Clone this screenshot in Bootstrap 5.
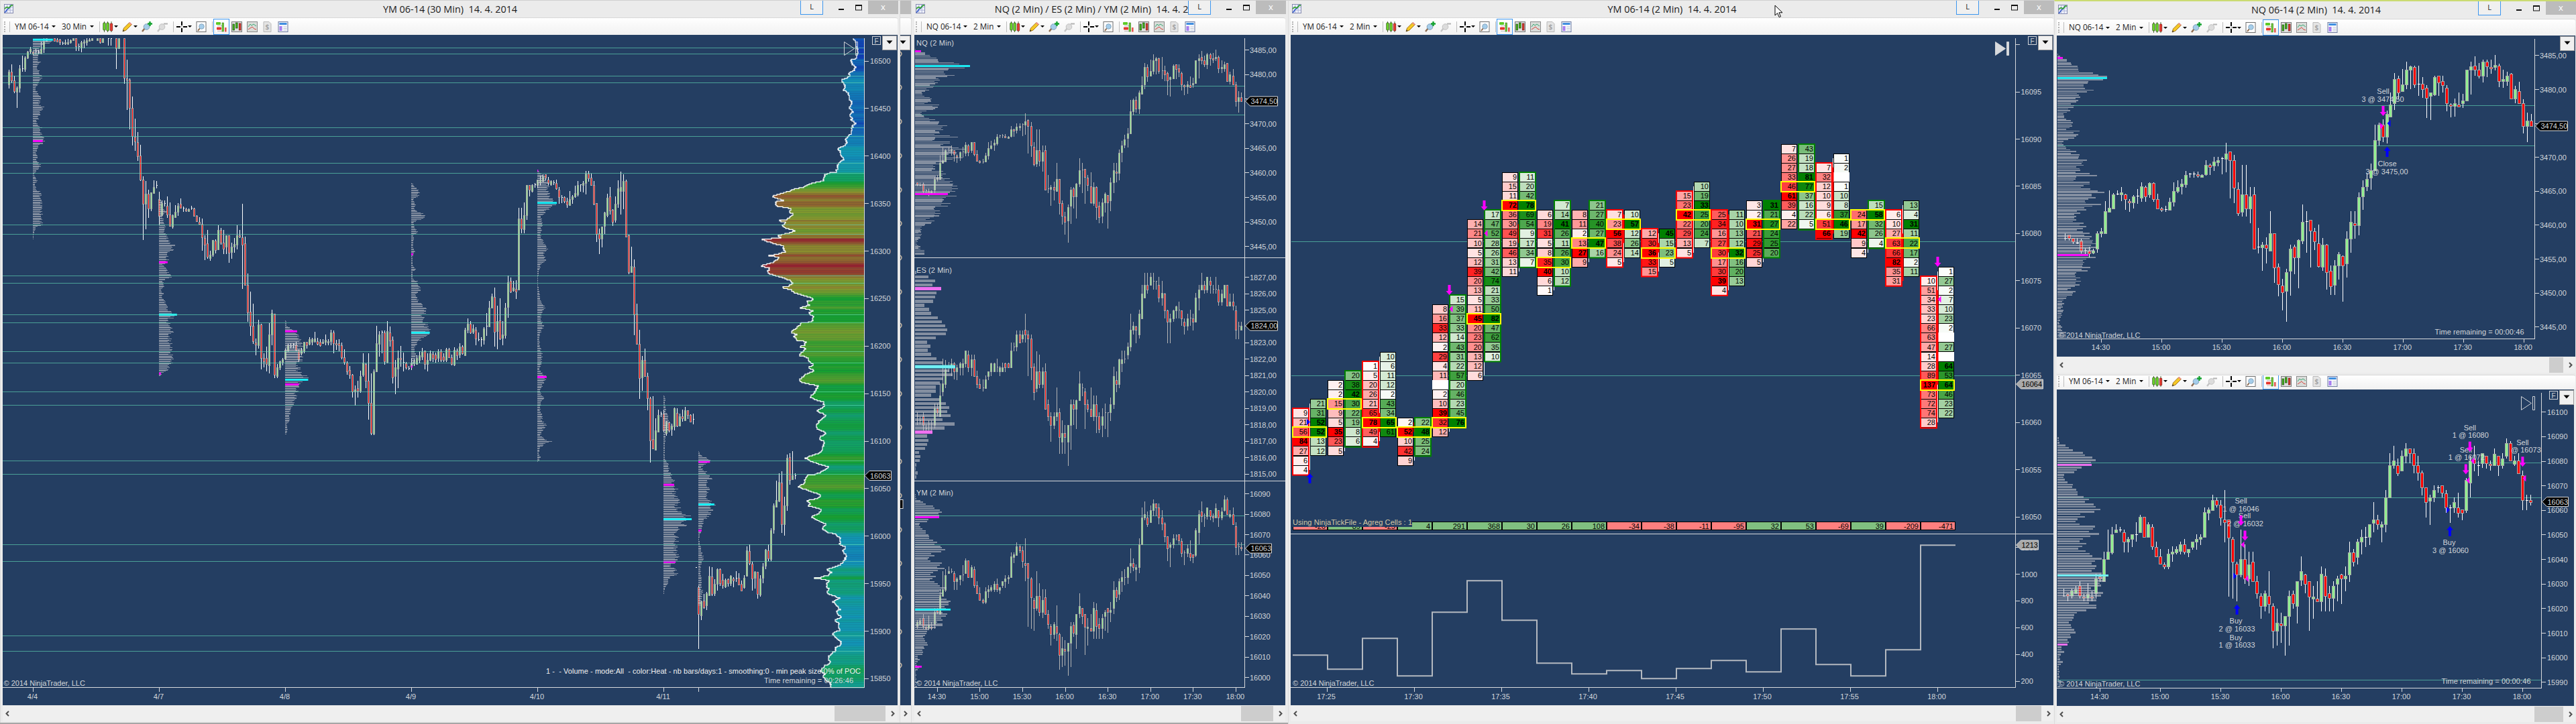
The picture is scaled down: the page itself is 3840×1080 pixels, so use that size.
<!DOCTYPE html>
<html lang="en">
<head>
    <meta charset="UTF-8">
    <meta name="viewport" content="width=device-width, initial-scale=1.0">
    <link href="https://cdn.jsdelivr.net/npm/bootstrap@5.3.2/dist/css/bootstrap.min.css" rel="stylesheet">
    <title>NinjaTrader Charts</title>
    <style>
        body {
            width: 3840px;
            height: 1080px;
            overflow: hidden;
            background-color: #a6a6a6;
            font-family: "Open Sans", "Noto Sans", sans-serif;
            color: #1c1c1c;
        }
        .win {
            height: 1078px;
            background-color: #ebebeb;
            border-top: 1px solid #d0d0d0;
            border-left: 1px solid #dcdcdc;
            flex: none;
        }
        .win-1 { width: 1341px; padding: 0 3px 0 3px; }
        .win-back { width: 17px; padding-right: 0; overflow: hidden; }
        .win-2 { width: 562px; padding: 0 4px 0 4px; }
        .win-3 { width: 1142px; padding: 0 1px 0 3px; height: 1080px; }
        .win-4 { width: 778px; padding: 0 1px 0 3px; height: 1080px; border-top: 2px solid #cbdb72; }
        .title-bar {
            height: 25px;
            flex: none;
            font-size: 14.4px;
            line-height: 25px;
            white-space: pre;
        }
        .win-4 .title-bar { height: 26px; }
        .app-icon { top: 5px; left: 2px; }
        .win-btns { right: -1px; top: 0; height: 20px; }
        .l-btn {
            width: 34px;
            height: 21px;
            border: 1px solid #3c96ef;
            border-top: 0;
            background-color: #f0f0f0;
            font-size: 11px;
            line-height: 18px;
        }
        .min-max { width: 54px; margin-left: 13px; }
        .close-btn { width: 45px; height: 20px; background-color: #bcbcbc; color: #fff; font-size: 13px; line-height: 19px; }
        .tool-bar {
            height: 26px;
            flex: none;
            background: linear-gradient(#ffffff, #f1f1f1);
            border-top: 1px solid #d8d8d8;
            border-radius: 0 3px 3px 0;
            font-size: 11.7px;
            padding-left: 2px;
            overflow: hidden;
        }
        .win-4 .tool-bar { height: 25px; }
        .win-4 .tool-low { height: 22px; margin-top: 3px; }
        .tool-low > * { position: relative; top: -2px; }
        .grip { width: 2px; height: 16px; border-left: 2px dotted #b4b4b4; margin-right: 6px; }
        .bar-sep { width: 1px; height: 16px; background-color: #bdbdbd; }
        .caret { border: 3px solid transparent; border-top-color: #000; border-bottom: 0; width: 6px; height: 3px; }
        .tool-on { outline: 1px solid #3c96ef; outline-offset: 3px; background-color: #fff; }
        .chart { flex: none; display: block; background-color: #243e62; }
        .chart text { font-family: "Liberation Sans", Arial, sans-serif; font-size: 11px; fill: #d3d6da; white-space: pre; }
        .chart .dark { fill: #000; }
        .scroll-bar { height: 23px; flex: none; background-color: #efefef; margin-top: 1px; color: #444; }
        .thumb { height: 23px; background-color: #cdcdcd; }
        .mouse { left: 724px; top: 6px; z-index: 3; }
    </style>
</head>
<body>
<div class="d-flex">
    <section class="win win-1 d-flex flex-column">
        <div class="title-bar position-relative text-center">YM 06-14 (30 Min)  14. 4. 2014</div>
        <div class="tool-bar d-flex align-items-center" data-symbol="YM 06-14" data-period="30 Min" data-on="1"></div>
        <svg class="chart" id="ym30" width="1334" height="1000" viewBox="4 52 1334 1000"></svg>
        <div class="scroll-bar d-flex justify-content-between align-items-center" data-thumb="76" data-gap="1"></div>
    </section>

    <section class="win win-back d-flex flex-column">
        <div style="height: 25px"><div class="close-btn"></div></div>
        <div class="tool-bar"></div>
        <svg class="chart" id="back" width="16" height="1000" viewBox="1342 52 16 1000"></svg>
        <div class="scroll-bar d-flex justify-content-center align-items-center">
            <svg width="6" height="9" viewBox="0 0 6 9"><path d="M1 1l3.5 3.5L1 8" fill="none" stroke="#505050" stroke-width="2"/></svg>
        </div>
    </section>

    <section class="win win-2 d-flex flex-column">
        <div class="title-bar position-relative text-center">NQ (2 Min) / ES (2 Min) / YM (2 Min)  14. 4. 2014</div>
        <div class="tool-bar d-flex align-items-center" data-symbol="NQ 06-14" data-period="2 Min"></div>
        <svg class="chart" id="triple" width="553" height="1000" viewBox="1363 52 553 1000"></svg>
        <div class="scroll-bar d-flex justify-content-between align-items-center" data-thumb="48" data-gap="1"></div>
    </section>

    <section class="win win-3 d-flex flex-column position-relative">
        <div class="title-bar position-relative text-center">YM 06-14 (2 Min)  14. 4. 2014</div>
        <div class="tool-bar d-flex align-items-center" data-symbol="YM 06-14" data-period="2 Min" data-on="1"></div>
        <svg class="chart" id="cells" width="1137" height="1000" viewBox="1924 52 1137 1000"></svg>
        <div class="scroll-bar d-flex justify-content-between align-items-center" data-thumb="38" data-gap="4"></div>
        <svg class="mouse position-absolute" width="14" height="20" viewBox="0 0 14 20"><path d="M1 1v15l3.6-3.4 2.6 6 2.3-1-2.6-5.8H12z" fill="#fff" stroke="#000"/></svg>
    </section>

    <section class="win win-4 d-flex flex-column">
        <div class="title-bar position-relative text-center">NQ 06-14 (2 Min)  14. 4. 2014</div>
        <div class="tool-bar d-flex align-items-center" data-symbol="NQ 06-14" data-period="2 Min" data-on="1"></div>
        <svg class="chart" id="nq2" width="773" height="479" viewBox="3066 53 773 479"></svg>
        <div class="scroll-bar d-flex justify-content-between align-items-center" data-thumb="21" data-gap="1"></div>
        <div class="tool-bar tool-low d-flex align-items-center" data-symbol="YM 06-14" data-period="2 Min" data-on="1"></div>
        <svg class="chart" id="ym2" width="771" height="472" viewBox="3065 582 771 472"></svg>
        <div class="scroll-bar d-flex justify-content-between align-items-center" data-thumb="43" data-gap="1"></div>
    </section>
</div>

<script src="https://cdn.jsdelivr.net/npm/bootstrap@5.3.2/dist/js/bootstrap.bundle.min.js"></script>
<script>
    // ---------- window chrome ----------
    const icon = (body, cls = '', ml = 0) => `<svg class="${cls}" width="16" height="16" viewBox="0 0 16 16" style="margin-left:${ml}px;flex:none">${body}</svg>`;
    const caret = ml => `<span class="caret" style="margin-left:${ml}px"></span>`;
    const sep = ml => `<span class="bar-sep" style="margin-left:${ml}px"></span>`;

    const ICONS = {
        candles: '<g stroke="#2a4a10" stroke-width=".8"><path d="M2.5 0v16M7.5 0v16M13 0v16"/><rect x=".8" y="2" width="3.4" height="11" rx="1" fill="#6fe02c"/><rect x="5.9" y="2" width="3.4" height="12" rx="1" fill="#6fe02c"/><rect x="11.3" y="3" width="3.4" height="11" rx="1" fill="#e83a30" stroke="#7c1a10"/></g>',
        pencil: '<path d="M1 15l1.5-5L11 1.5l3.5 3L6 13z" fill="#f5c826" stroke="#a5761a"/><path d="M10 2.5l1.5-1.6 3.2 3-1.5 1.6z" fill="#ee8f8a"/><path d="M1 15l.9-2.8L3.600 14z" fill="#333"/>',
        zoomIn: '<path d="M1 15l4-5" stroke="#8e6c50" stroke-width="2.4"/><circle cx="7.500" cy="8" r="4.300" fill="#a5cdea" stroke="#7f9fb8"/><path d="M12.500 0v7M9 3.500h7" stroke="#12a22e" stroke-width="2.400"/>',
        zoomOut: '<path d="M1 15l4-5" stroke="#c4c4c4" stroke-width="2.4"/><circle cx="7.500" cy="8" r="4.300" fill="#dcdcdc" stroke="#c0c0c0"/><path d="M10 3.500h6" stroke="#b4b4b4" stroke-width="1.800"/>',
        cross: '<path d="M8 0v6M8 10v6M0 8h6M10 8h6" stroke="#000" stroke-width="2"/><path d="M7.500 8h1" stroke="#000"/>',
        page: '<rect x="1" y=".5" width="14" height="15" fill="#fff" stroke="#6e6e6e"/><path d="M3 14l3-4" stroke="#8e6c50" stroke-width="2"/><circle cx="8.500" cy="7.500" r="3.800" fill="#a5cdea" stroke="#86a5bd"/>',
        depth: '<rect x="0" y="1" width="7" height="4" rx="1" fill="#5ecb27"/><rect x="1" y="8.500" width="7" height="4" rx="1" fill="#e3372e"/><path d="M2 6.500h8M2 14.500h8" stroke="#bbb"/><rect x="9" y="2" width="2.500" height="13" fill="#6fd035" stroke="#31711a" stroke-width=".6"/><rect x="13" y="9" width="2.600" height="6.500" fill="#e35750"/>',
        bars: '<rect x=".5" y=".5" width="15" height="15" fill="#dedede" stroke="#7a7a7a"/><rect x="2" y="4" width="2.600" height="9" fill="#45b51c" stroke="#164e08" stroke-width=".7"/><rect x="6.500" y="2" width="2.600" height="8" fill="#45b51c" stroke="#164e08" stroke-width=".7"/><rect x="11.300" y="3" width="2.700" height="10" fill="#dd3a30" stroke="#6e150f" stroke-width=".7"/>',
        area: '<rect x=".5" y=".5" width="15" height="15" fill="#d9dcd9" stroke="#8a8a8a"/><path d="M2 8l3-4 2 2 3-2 4 3" fill="none" stroke="#3aa873"/><path d="M2 12l3-2 3-2 3 3 3 1" fill="none" stroke="#d8453d"/>',
        dollar: '<path d="M2 .5h8l3 3v12H2z" fill="#e4e4e4" stroke="#b9b9b9"/><text x="4.500" y="12" font-size="10" font-weight="bold" fill="#a5a5a5">$</text>',
        form: '<rect x="1" y=".5" width="14" height="15" fill="#f4f6fb" stroke="#6d7aa0"/><rect x="2.500" y="2" width="11" height="3" fill="#3f8ee0"/><rect x="2.500" y="7" width="4" height="7" fill="#a77ff0"/><path d="M8.500 8h5M8.500 10.500h5M8.500 13h5" stroke="#c5cad6"/>',
        app: '<rect x=".5" y=".5" width="15" height="15" fill="#eef0fa" stroke="#7a80a8"/><path d="M5.500 1v14M10.500 1v14M1 5.500h14M1 10.500h14" stroke="#a9b0d6"/><path d="M1 14c4 0 3-6 6-6s3-3 4-6" fill="none" stroke="#2a54c8" stroke-width="1.600"/><path d="M1 8l4-3 3 2 5-5 2 1" fill="none" stroke="#34a72c" stroke-width="1.800"/>'
    };

    document.querySelectorAll('.tool-bar[data-symbol]').forEach(bar => {
        bar.innerHTML = '<span class="grip"></span>' + sep(0)
            + `<span style="margin-left:7px;width:51px;white-space:nowrap">${bar.dataset.symbol}</span>` + caret(4)
            + `<span style="margin-left:9px;white-space:nowrap">${bar.dataset.period}</span>` + caret(5) + sep(8)
            + icon(ICONS.candles, '', 4) + caret(1) + icon(ICONS.pencil, '', 6) + caret(1)
            + icon(ICONS.zoomIn, '', 6) + icon(ICONS.zoomOut, '', 7) + sep(8)
            + icon(ICONS.cross, '', 4) + caret(1) + icon(ICONS.page, '', 6) + sep(8)
            + icon(ICONS.depth, bar.dataset.on ? 'tool-on' : '', 5) + icon(ICONS.bars, '', 7)
            + icon(ICONS.area, '', 7) + icon(ICONS.dollar, '', 7) + icon(ICONS.form, '', 7);
    });

    document.querySelectorAll('.title-bar').forEach(bar => {
        bar.insertAdjacentHTML('beforeend', `
            <svg class="app-icon position-absolute" width="14" height="14" viewBox="0 0 16 16">${ICONS.app}</svg>
            <div class="win-btns position-absolute d-flex">
                <div class="l-btn text-center">L</div>
                <svg class="min-max" width="54" height="20" viewBox="0 0 54 20"><path d="M10 13h8" stroke="#111" stroke-width="2"/><rect x="35.500" y="7" width="9" height="7" fill="none" stroke="#111"/><path d="M35 7h10" stroke="#111" stroke-width="2"/></svg>
                <div class="close-btn text-center">x</div>
            </div>`);
    });

    document.querySelectorAll('.scroll-bar[data-thumb]').forEach(bar => {
        const arrow = d => `<svg width="6" height="9" viewBox="0 0 6 9"><path d="${d}" fill="none" stroke="#505050" stroke-width="2"/></svg>`;
        bar.innerHTML = `<span class="d-flex ms-1">${arrow('M5 1L1.500 4.500 5 8')}</span>
            <span class="d-flex align-items-center"><span class="thumb" style="width:${bar.dataset.thumb}px"></span>
            <span class="d-flex ms-2 me-1">${arrow('M1 1l3.500 3.500L1 8')}</span></span>`;
    });

    // ---------- drawing helpers ----------
    const r1 = n => Math.round(n * 10) / 10;
    const rect = (x, y, w, h, fill, extra = '') => `<rect x="${r1(x)}" y="${r1(y)}" width="${r1(w)}" height="${r1(h)}" fill="${fill}" ${extra}/>`;
    const line = (x1, y1, x2, y2, color, w = 1) => `<path d="M${r1(x1)} ${r1(y1)}L${r1(x2)} ${r1(y2)}" stroke="${color}" stroke-width="${w}" shape-rendering="crispEdges"/>`;
    const text = (x, y, s, anchor = 'start', extra = '') => `<text x="${r1(x)}" y="${r1(y + 4)}" text-anchor="${anchor}" ${extra}>${s}</text>`;
    const level = (x1, x2, y) => line(x1, y, x2, y, 'rgba(100,225,185,.6)');
    const snap = n => Math.floor(n) + .5;
    const draw = (id, s) => { document.getElementById(id).innerHTML = s; };
    const AXIS = '#d8dadd', CYAN = '#18f0f8', MAGENTA = '#ff00ff', PROFILE = 'rgba(200,200,205,.58)';

    function candles(list, xAt, yAt, half, wick) {
        let s = '';
        list.split('|').forEach((c, i) => {
            const [h, t, b, l, dir] = c.split(' ');
            if (!l) return;
            const x = snap(xAt(i));
            s += line(x, yAt(+h), x, yAt(+l), wick);
            if (!dir || b - t < 3) {
                s += line(x - half, snap(yAt(+t)), x + half, snap(yAt(+t)), wick);
                return;
            }
            const y = Math.round(yAt(+t)), y2 = Math.max(Math.round(yAt(+b)), y + 2);
            s += rect(x - half, y + .5, half * 2, y2 - y, dir === 'g' ? '#90ee90' : '#ff0000', 'stroke="#a9a9a9" shape-rendering="crispEdges"');
        });
        return s;
    }

    function profile(widths, x, y0, y1, scale, marks = []) {
        const step = (y1 - y0) / (widths.length - 1);
        let s = widths.map((w, i) => rect(x, y0 + (i - .35) * step, w * scale, step * .72, PROFILE, 'shape-rendering="crispEdges"')).join('');
        marks.forEach(([y, w, color]) => { s += rect(x, y - Math.max(1.400, step * .4), w, Math.max(2.800, step * .8), color); });
        return s;
    }

    // linear interpolation through [position, value] pairs
    function between(points, v) {
        let k = 1;
        while (k < points.length - 1 && points[k][0] < v) k++;
        const [a, wa] = points[k - 1], [b, wb] = points[k];
        return wa + (wb - wa) * Math.min(1, Math.max(0, (v - a) / (b - a)));
    }
    const pairs = s => s.split(' ').map(p => p.split(',').map(Number));

    function priceTag(x, y, right, label, grey) {
        return `<path d="M${x} ${y}l7 -7H${right}v14H${x + 7}z" fill="${grey ? '#a9a9a9' : '#000'}" stroke="#d8d8d8"/>`
            + text(x + 8, y, label, 'start', grey ? 'class="dark"' : '');
    }
    const copyright = (x, y) => text(x, y, '© 2014 NinjaTrader, LLC');
    const dropButton = (x, y) => rect(x, y, 21, 21, '#f0f0f0', 'stroke="#9a9a9a"') + `<path d="M${x + 6} ${y + 7}h9l-4.500 5z" fill="#000"/>`;
    const fBox = (x, y) => rect(x + .5, y + .5, 12, 12, 'none', 'stroke="#d3d6da"') + text(x + 6.500, y + 6.500, 'F', 'middle', 'style="font-size:10px"');
    const skipIcon = (x, y, fill) => `<path d="M${x} ${y}l15 10-15 10zM${x + 17} ${y}h3v20h-3z" fill="${fill}" stroke="#cfd2d6"/>`;
    const arrowDown = (x, y) => `<path d="M${x - 2} ${y}h4v9h3l-5 6-5-6h3z" fill="${MAGENTA}"/>`;
    const arrowUp = (x, y) => `<path d="M${x - 2} ${y}h4v-9h3l-5-6-5 6h3z" fill="#0000ff"/>`;
    const triLeft = (x, y, c) => `<path d="M${x - 3} ${y}l5-5v10z" fill="${c}"/>`;
    const triRight = (x, y, c) => `<path d="M${x + 3} ${y}l-5-5v10z" fill="${c}"/>`;

    // ---------- YM 30 minute chart ----------
    const YM30 = '303 312 367 383 g|279 312 347 359 r|328 347 396 404 r|373 380 398 467 g|282 296 381 400 g|240 299 300 310|245 250 298 311 g|220 224 251 256 g|204 212 224 232 g|222 225 231 238 r|212 222 225 236|215 225 228 235|180 212 228 236 g|166 180 212 228 g|166 166 178 180 g|-|-|166 166 178 180 r|166 172 181 184 r|168 170 184 194 r|180 188 190 195|170 184 190 195 g|168 182 188 195 g|172 173 182 188 g|166 166 173 176 g|166 166 201 220 r|190 201 203 221|178 184 205 225 g|170 179 184 210 g|166 173 182 196 g|166 170 178 180 g|166 166 174 176 g|-|166 166 174 174 g|166 166 182 188 r|166 166 182 182 g|-|166 166 167 196|166 166 167 196|-|166 166 210 299 r|166 166 210 211 g|-|166 166 338 362 r|258 339 346 475 r|339 346 468 559 r|418 468 588 630 r|514 593 614 653 r|572 616 676 697 r|627 675 779 783 r|764 779 882 1040 r|785 840 882 992 g|823 840 902 943 r|833 833 902 914 g|781 811 835 836 g|784 802 804 817|829 862 935 974 r|868 880 932 934 g|868 882 884 895|851 890 930 944 r|876 930 978 980 r|930 933 980 990 g|889 918 941 944 g|880 890 918 934 g|858 884 900 902 r|893 903 905 917|900 905 912 918 r|903 905 915 918 g|890 903 905 908|901 902 934 936 r|932 934 959 962 r|940 960 969 971 r|947 971 1029 1087 r|1018 1030 1059 1126 r|996 1055 1112 1122 r|1087 1103 1117 1130 g|1038 1040 1103 1112 g|1036 1041 1084 1097 r|976 996 1079 1080 g|986 996 1050 1060 r|996 1050 1078 1099 r|1018 1020 1069 1099 g|1018 1020 1096 1137 r|1050 1068 1091 1121 g|1032 1058 1070 1096 g|976 1018 1060 1080 g|996 1018 1026 1032 r|883 1029 1061 1250 r|1026 1055 1233 1235 r|1184 1233 1354 1394 r|1262 1351 1410 1454 r|1315 1410 1479 1490 r|1466 1483 1492 1538 r|1386 1404 1495 1510 g|1402 1404 1550 1600 r|1530 1550 1565 1592 r|1500 1550 1578 1609 r|1400 1450 1582 1617 g|1342 1356 1450 1496 g|1360 1360 1622 1638 r|1577 1592 1628 1637 g|1563 1565 1592 1604 g|1550 1555 1568 1583 g|1510 1515 1553 1560 g|1490 1494 1520 1524 g|1488 1500 1502 1510|1486 1492 1494 1510|1482 1492 1515 1520 r|1512 1515 1555 1568 r|1506 1515 1530 1540 g|1480 1482 1522 1530 g|1480 1482 1495 1510 r|1460 1468 1490 1496 g|1462 1470 1480 1496 g|1437 1466 1478 1484 g|1462 1478 1490 1496 r|1470 1482 1495 1500 r|1470 1480 1488 1490 g|1450 1473 1482 1495 g|1468 1478 1483 1494 g|1429 1440 1478 1495 g|1432 1440 1488 1530 r|1472 1488 1492 1515 r|1470 1486 1496 1520 r|1485 1494 1548 1555 r|1513 1548 1568 1580 r|1565 1570 1608 1622 r|1585 1602 1622 1640 r|1620 1622 1697 1722 r|1670 1686 1697 1756 g|1648 1680 1692 1723 r|1606 1628 1692 1700 g|1530 1570 1622 1633 g|1575 1578 1650 1680 r|1530 1650 1746 1818 r|1617 1746 1875 1885 r|1600 1610 1878 1885 g|1410 1488 1608 1610 g|1435 1450 1490 1546 g|1432 1440 1442 1530|1432 1440 1565 1580 r|1391 1434 1568 1574 g|1413 1440 1475 1500 r|1458 1472 1635 1660 r|1560 1592 1628 1706 g|1518 1550 1598 1680 g|1497 1550 1555 1588 r|1526 1568 1570 1608|1568 1575 1592 1600 r|1585 1597 1599 1602|1550 1572 1588 1604 g|1555 1565 1575 1585 g|1540 1550 1578 1580 g|1520 1540 1560 1575 g|1508 1525 1545 1560 g|1518 1520 1578 1600 r|1530 1560 1578 1608 g|1519 1530 1560 1566 g|1520 1532 1550 1568 r|1527 1535 1555 1570 r|1512 1521 1552 1568 g|1512 1521 1560 1568 r|1530 1545 1558 1568 r|1508 1514 1558 1568 g|1508 1514 1548 1550 r|1535 1548 1578 1582 r|1505 1515 1580 1585 g|1510 1518 1538 1560 r|1488 1500 1535 1550 g|1496 1500 1530 1535 r|1420 1430 1538 1540 g|1378 1402 1430 1442 g|1390 1403 1441 1445 r|1405 1424 1438 1445 g|1416 1430 1465 1495 r|1440 1470 1470 1478|1460 1470 1472 1500|1418 1422 1473 1492 g|1355 1413 1415 1455|1303 1333 1413 1414 g|1273 1284 1333 1337 g|1246 1287 1438 1500 r|1325 1392 1433 1513 g|1292 1387 1465 1472 r|1390 1448 1463 1495 g|1312 1333 1451 1466 g|1193 1223 1331 1375 g|1202 1218 1262 1270 r|1217 1246 1256 1262 g|1213 1252 1262 1295 r|900 948 1255 1256 g|900 948 990 1010 r|877 933 992 1010 g|800 802 931 951 g|800 801 822 850 r|798 800 829 832 g|792 800 800 812|778 779 800 815 g|762 779 790 803 g|755 765 785 790 g|755 756 770 782 r|765 779 793 804 r|780 785 798 805 g|780 792 793 800|778 792 815 822 r|810 822 854 882 r|845 855 857 880|851 855 870 880 r|855 870 885 900 r|828 862 888 892 g|845 850 862 882 g|805 835 850 855 g|785 800 842 852 g|797 800 801 831|785 792 800 832 g|741 752 793 842 g|741 752 773 788 r|752 770 801 803 r|785 800 884 888 r|880 881 1012 1047 r|990 1010 1033 1101 r|980 982 1033 1071 g|918 920 978 1013 g|840 856 931 940 g|811 852 912 930 r|907 908 960 978 r|852 884 951 965 g|782 815 884 901 g|743 811 828 928 g|754 785 828 905 g|778 785 1026 1028 r|1016 1020 1178 1188 r|1069 1154 1178 1182 g|1124 1157 1361 1453 r|1314 1360 1489 1492 r|1428 1489 1637 1728 r|1542 1560 1636 1693 g|1510 1558 1628 1632 r|1613 1628 1726 1777 r|1718 1725 1907 2004 r|1717 1903 1944 1946 r|1813 1865 1947 1948 g|1775 1798 1871 1872 g|1783 1792 1794 1806|1778 1792 1863 1870 r|1823 1826 1875 1887 g|1825 1828 1864 1872 r|1835 1845 1857 1886 g|1766 1768 1847 1863 g|1768 1788 1845 1850 r|1792 1802 1844 1848 g|1775 1803 1813 1826 r|1763 1778 1820 1821 g|1777 1778 1798 1815 r|1795 1798 1827 1830 r|1792 1817 1819 1838|2457 2458 2458 2459|2537 2543 2661 2812 r|2602 2605 2665 2685 g|2572 2603 2632 2636 r|2563 2570 2623 2642 g|2454 2495 2578 2580 g|2457 2496 2573 2580 r|2510 2530 2571 2580 g|2462 2465 2530 2558 g|2462 2465 2525 2538 r|2485 2512 2535 2550 r|2505 2512 2542 2545 g|2506 2508 2525 2542 r|2490 2495 2526 2538 g|2500 2505 2516 2543 r|2475 2503 2505 2520|2482 2502 2532 2535 r|2515 2530 2557 2558 r|2490 2502 2543 2548 g|2367 2385 2495 2497 g|2358 2388 2438 2447 r|2432 2443 2507 2558 r|2475 2478 2504 2550 g|2478 2478 2572 2592 r|2490 2507 2576 2585 g|2440 2455 2502 2525 g|2378 2380 2452 2465 g|2358 2385 2418 2430 r|2288 2297 2422 2430 g|2181 2190 2295 2310 g|2083 2167 2196 2197 g|2050 2089 2168 2175 g|2042 2092 2270 2308 r|2151 2190 2270 2320 g|1970 1983 2190 2212 g|1962 1980 2080 2100 r|1953 2060 2075 2080 g|2050 2060 2062 2075';

    const K = 2.9037;
    const DAYS = [
        { x: 49, k: 2.24, p: '168,67 180,60 190,40 205,28 225,25 245,15 270,25 290,12 310,25 330,32 345,25 380,10 400,15 425,28 445,20 463,40 480,25 510,20 525,12 540,18 550,30 580,30 600,40 620,35 630,20 660,12 680,20 690,12 715,28 740,12 755,3 780,14 800,8 820,15 835,30 860,25 885,33 910,30 945,28 970,32 985,12 1000,5 1035,1', c: [172, 67], m: [[611, 33]] },
        { x: 237, k: 2.24, p: '865,8 900,10 915,28 935,12 960,18 980,25 1000,18 1030,30 1060,52 1085,42 1100,32 1130,30 1145,15 1160,22 1190,40 1200,40 1215,12 1240,18 1255,5 1270,15 1290,12 1310,25 1340,30 1363,58 1375,48 1385,30 1405,40 1440,46 1470,38 1500,42 1530,42 1560,52 1590,35 1605,25 1615,10 1630,2', c: [1363, 60], m: [[1136, 29], [1618, 7]] },
        { x: 425, k: 2.24, p: '1388,3 1410,6 1430,28 1450,45 1490,55 1530,60 1560,55 1580,48 1610,50 1628,70 1645,77 1660,50 1680,45 1700,42 1740,32 1770,20 1790,15 1820,18 1835,5 1850,8 1880,6', c: [1645, 77], m: [[1435, 40], [1665, 46]] },
        { x: 613, k: 2.24, p: '792,2 805,12 820,27 848,27 860,6 885,15 905,10 925,38 940,50 955,20 965,8 990,14 1005,22 1015,8 1040,10 1060,5 1090,12 1110,4 1150,6 1162,14 1180,5 1205,6 1215,20 1250,32 1280,15 1310,30 1330,48 1360,45 1380,36 1400,56 1441,62 1460,40 1480,25 1510,10 1540,18 1570,10 1590,3', c: [1441, 62], m: [[1101, 6], [1588, 4]] },
        { x: 801, k: 2.306, p: '740,4 760,25 790,38 830,38 860,50 880,66 895,45 915,32 935,12 960,18 990,15 1010,10 1040,20 1075,36 1100,22 1125,30 1150,12 1180,4 1230,2 1270,8 1300,12 1330,26 1350,18 1380,12 1410,22 1440,12 1470,6 1500,10 1530,18 1550,18 1570,15 1600,6 1620,25 1635,32 1650,25 1680,15 1700,10 1725,25 1750,12 1775,10 1800,18 1820,15 1840,30 1860,20 1885,10 1910,45 1920,30 1935,12 1960,4 1980,12 2000,2', c: [879, 67], m: [[1633, 32], [739, 3]] },
        { x: 989, k: 2.306, p: '1713,3 1725,8 1740,4 1780,10 1830,20 1860,18 1880,8 1930,5 1970,4 1990,6 2010,20 2040,20 2060,30 2080,38 2100,37 2120,50 2140,38 2165,58 2190,50 2215,60 2237,95 2250,97 2262,80 2275,75 2290,52 2320,50 2350,48 2380,45 2410,50 2435,40 2450,20 2465,50 2490,45 2500,22 2520,18 2545,5 2570,2', c: [2249, 97], m: [[2100, 37], [2434, 42]] },
        { x: 1041, k: 2.306, p: '1955,2 1970,10 1985,35 1998,40 2020,10 2040,25 2070,48 2090,30 2110,40 2140,30 2165,40 2185,55 2210,48 2235,38 2250,18 2290,12 2300,10 2330,3 2370,8 2400,14 2420,20 2450,8 2490,10 2530,12 2560,14 2590,12 2620,10', c: [2185, 55], m: [[2000, 40], [2298, 11]] }
    ];

    // left edge of the heat coloured volume profile, top to bottom
    const HEAT = pairs('166,1322 180,1325 200,1330 215,1335 235,1331 255,1328 258,1312 270,1313 280,1318 290,1327 305,1322 318,1305 330,1308 340,1290 347,1277 360,1285 375,1292 390,1286 400,1300 430,1305 450,1316 468,1305 485,1318 497,1304 510,1315 520,1312 535,1327 545,1316 560,1316 580,1310 595,1298 605,1292 618,1297 630,1292 640,1268 650,1268 655,1276 675,1278 690,1290 700,1275 715,1265 735,1263 745,1260 750,1235 758,1220 782,1215 790,1190 800,1165 812,1145 820,1115 832,1090 845,1050 852,1042 862,1060 868,1080 872,1055 892,1052 900,1090 908,1110 915,1097 930,1112 940,1100 952,1088 956,1060 965,1090 975,1073 990,1092 1000,1120 1008,1100 1017,1072 1022,1058 1030,1070 1036,1005 1042,1015 1055,1045 1065,1078 1080,1080 1092,1085 1100,1060 1107,1030 1115,1065 1125,1055 1135,1045 1145,1020 1152,1003 1162,1035 1175,1022 1188,1035 1200,1070 1215,1100 1228,1112 1238,1100 1245,1070 1255,1105 1270,1120 1285,1165 1298,1185 1305,1158 1322,1168 1333,1132 1345,1183 1355,1165 1370,1180 1393,1180 1400,1140 1420,1125 1438,1103 1450,1125 1458,1115 1475,1128 1480,1158 1495,1150 1500,1133 1510,1155 1525,1143 1540,1135 1550,1165 1565,1165 1580,1182 1590,1165 1605,1185 1615,1170 1625,1150 1650,1133 1662,1155 1670,1200 1690,1190 1700,1185 1720,1172 1735,1195 1742,1215 1760,1220 1780,1195 1800,1227 1820,1205 1840,1192 1860,1195 1870,1220 1880,1225 1890,1205 1905,1205 1912,1218 1940,1215 1965,1200 1975,1170 1985,1155 2000,1175 2015,1215 2022,1232 2040,1215 2055,1190 2060,1160 2080,1153 2095,1150 2108,1127 2125,1165 2145,1208 2160,1195 2168,1162 2180,1172 2190,1162 2205,1210 2225,1200 2240,1175 2255,1195 2270,1225 2290,1212 2305,1230 2312,1255 2330,1275 2360,1272 2370,1295 2385,1283 2410,1297 2440,1280 2455,1260 2465,1228 2480,1245 2492,1232 2500,1205 2504,1185 2515,1240 2530,1225 2550,1235 2570,1230 2580,1250 2590,1272 2605,1250 2625,1262 2640,1275 2650,1260 2675,1278 2685,1255 2700,1270 2730,1272 2745,1245 2765,1265 2790,1280 2805,1260 2820,1257 2835,1240 2855,1232 2870,1240 2885,1220 2905,1205 2920,1222 2935,1215 2950,1230 2965,1245 2977,1240');
    const HEAT_COLORS = [[25, 16, 60, 178], [50, 18, 115, 182], [80, 18, 148, 182], [110, 18, 158, 150], [145, 18, 160, 90], [175, 20, 160, 48], [225, 88, 158, 46], [265, 138, 150, 46], [305, 144, 100, 46], [350, 150, 32, 46]];
    const heatColor = w => 'rgb(' + [1, 2, 3].map(c => Math.round(between(HEAT_COLORS.map(h => [h[0], h[c]]), w))).join(',') + ')';
    const noise = i => { const n = Math.sin(i * 127.1) * 43758.5453; return n - Math.floor(n); };

    function drawYm30() {
        let s = candles(YM30, i => 13 + i * 4, v => v / K, 1, '#ffffff');
        DAYS.forEach((d, n) => {
            const pts = pairs(d.p), from = pts[0][0], to = pts[pts.length - 1][0];
            for (let v = from, i = 0; v <= to; v += 4.120, i++) {
                const w = between(pts, v) * (.72 + .4 * noise(i + n * 97)) / d.k;
                s += rect(d.x, v / K, w, 1, PROFILE, 'shape-rendering="crispEdges"');
            }
            s += rect(d.x, d.c[0] / K - 1.500, d.c[1] / d.k, 3, CYAN);
            d.m.forEach(m => { s += rect(d.x, m[0] / K - 1.500, m[1] / d.k, 3, MAGENTA); });
        });
        let edge = '';
        for (let v = 166, i = 0; v < 2977; v += 4.120, i++) {
            const cx = between(HEAT, v + 2) + (noise(i) - .5) * 6;
            const x = Math.round(700 + cx / 2.306), y = v / K;
            s += rect(x, y, 1288 - x, 4.120 / K + .3, heatColor(1357 - cx));
            edge += `${edge ? 'L' : 'M'}${x} ${r1(y)}V${r1(y + 4.120 / K)}`;
        }
        s += `<path d="${edge}" fill="none" stroke="#fff" stroke-width="1.200"/>`;
        [207, 233, 329, 358, 553, 590, 707, 750, 974, 1014, 1194, 1226, 1363, 1398, 1523, 1572, 1697, 1755, 1996, 2054, 2359, 2431, 2754, 2820]
            .forEach(v => { s += level(4, 1288, snap(v / K)); });
        s += line(1288.500, 57, 1288.500, 1025, AXIS) + line(4, 1025.500, 1289, 1025.500, AXIS);
        for (let p = 0; p < 14; p++) {
            const y = 91 + p * 70.880;
            s += line(1289, snap(y), 1295, snap(y), AXIS) + text(1297, y, 16500 - p * 50);
        }
        [[49.500, '4/4'], [237.500, '4/7'], [425.500, '4/8'], [613.500, '4/9'], [801.500, '4/10'], [989.500, '4/11'], [1041.500, '']].forEach(([x, t]) => {
            s += line(x, 1026, x, 1032, AXIS) + text(x - 1, 1038.500, t, 'middle');
        });
        s += text(1283, 1000.500, '1 -  - Volume - mode:All  - color:Heat - nb bars/days:1 - smoothing:0 - min peak size:0% of POC', 'end', 'textLength="469" style="fill:#f0f0f0"');
        s += text(1272, 1014.500, 'Time remaining = 00:26:46', 'end', 'textLength="133"');
        s += copyright(5.500, 1019) + priceTag(1289, 709.500, 1328.500, '16063');
        s += skipIcon(1258.500, 62.500, 'none') + fBox(1300, 54) + dropButton(1315.500, 53.500);
        draw('ym30', s);
    }

    function drawBack() {
        let s = '';
        [80, 130, 181, 232, 283, 333, 384, 435, 485, 536, 587, 637, 688, 739, 790, 840, 891, 942, 992].forEach(y => {
            s += `<path d="M1342 ${y - 3}q4 3 0 7" fill="none" stroke="#c9b9a4" stroke-width="1.500"/>`;
        });
        s += rect(1338, 745.500, 8, 13, '#000', 'stroke="#ddd"') + dropButton(1335.500, 53.500);
        draw('back', s);
    }

    // ---------- 2 minute series, shared by two windows ----------
    const NQ = '974 995 995 1006|981 981 995 1006 r|995 995 1007 1018 r|995 1014 1014 1018|996 1004 1046 1058 r|1035 1045 1045 1060|1030 1046 1058 1075 r|1040 1046 1055 1062 g|965 974 1038 1056 g|952 967 974 990 g|840 883 975 978 g|795 869 884 886 g|805 811 870 872 g|795 811 811 815|781 804 811 840 g|808 811 832 876 r|832 841 846 884 r|815 820 846 871 g|790 819 819 850|762 777 825 842 g|775 781 819 843 r|762 763 811 825 g|762 763 832 842 r|808 832 870 872 r|866 870 875 885 r|860 875 875 885|825 842 875 876 g|762 797 842 862 g|753 781 797 806 g|747 767 777 812 g|715 732 769 783 g|722 727 728 741|716 727 727 741|716 727 732 741 r|727 732 740 741 g|670 689 727 734 g|684 689 697 730 r|655 675 692 714 g|655 670 678 695 g|655 661 661 728|596 642 663 720 g|633 634 670 828 r|648 670 783 848 r|762 790 889 902 r|689 811 885 905 g|689 811 870 903 r|781 819 871 932 g|781 811 1038 1038 r|952 1031 1031 1058|1010 1022 1032 1131 g|990 1023 1037 1100 r|882 975 1046 1046 g|975 975 1116 1182 r|1100 1115 1188 1238 r|1165 1193 1222 1296 r|1123 1137 1216 1343 g|1022 1038 1130 1236 g|1022 1030 1074 1145 r|1000 1003 1074 1203 g|855 926 1004 1020 g|883 925 925 1056|917 918 962 1117 r|952 967 1009 1045 r|938 1017 1111 1117 r|995 1022 1115 1131 g|1018 1022 1137 1210 r|1108 1130 1195 1231 r|1087 1110 1189 1231 g|1053 1060 1110 1167 g|1068 1069 1110 1260 r|967 996 1101 1160 g|883 926 996 1056 g|883 932 940 996 r|804 824 940 983 g|754 781 820 877 g|722 748 777 798 g|683 712 741 792 g|520 584 712 714 g|513 520 584 608 g|499 520 570 594 r|463 477 570 599 g|385 436 486 487 g|306 329 430 459 g|315 328 385 415 r|287 352 380 380 g|258 292 352 372 g|273 278 292 373 g|275 279 352 368 r|273 351 351 400|323 351 371 410 r|356 366 408 492 r|385 386 399 500 g|315 323 394 400 g|315 315 343 400 r|315 338 356 386 r|356 366 430 466 r|430 436 443 491 r|412 430 443 486 g|385 436 444 446 r|392 421 430 450 g|292 292 421 422 g|258 278 292 395 g|236 273 292 315 r|263 292 315 328 r|250 258 315 343 g|250 258 278 323 r|250 279 286 307 r|230 272 280 293 g|265 273 338 365 r|292 329 338 366 g|300 315 338 357 g|306 307 412 414 r|357 371 412 431 g|342 380 430 430 r|413 430 527 557 r|470 505 527 594 g|476 505 527 527 r';
    const YM = '985 1018 1018 1018|1005 1007 1016 1039 r|985 994 1016 1029 g|973 986 1005 1008 g|952 973 1016 1028 r|1008 1018 1026 1038 r|961 1007 1026 1038 g|995 1018 1026 1038 r|920 941 1006 1028 g|920 931 941 954 r|825 857 952 953 g|730 825 857 858 g|718 750 827 836 g|706 730 739 739 g|716 730 730 740|730 739 782 827 r|762 769 782 827 g|749 750 770 804 g|697 750 750 782|664 675 739 740 g|675 675 762 763 r|697 707 762 763 g|706 718 802 815 r|781 803 846 846 r|814 846 878 880 r|872 879 889 900 r|814 834 889 900 g|801 825 834 868 g|801 814 827 837 g|781 794 823 836 g|769 794 825 836 r|814 814 827 848 g|780 782 803 816 g|750 769 782 815 g|749 762 769 795 g|632 653 762 763 g|632 642 655 688 g|578 601 644 644 g|589 601 622 634 r|601 622 676 710 r|558 686 698 783 r|686 686 763 1018 r|762 769 867 1028 r|867 878 922 1039 r|728 857 922 935 g|793 857 942 964 r|825 879 942 974 g|825 867 953 954 r|930 953 1006 1028 r|1005 1017 1059 1115 r|993 1006 1059 1082 g|908 1017 1050 1091 r|1049 1059 1166 1243 r|1070 1132 1166 1230 g|1089 1134 1144 1220 r|1102 1102 1145 1275 g|993 1017 1102 1230 g|994 1007 1049 1070 r|952 953 1059 1135 g|845 910 948 972 g|920 922 963 1005 r|953 953 1018 1167 r|973 1018 1027 1115 g|952 1027 1039 1040 r|889 920 1039 1083 g|897 930 1016 1082 r|973 1006 1026 1083 r|953 974 1026 1082 g|930 941 963 1040 g|920 922 941 1050 r|889 930 942 996 g|781 827 922 954 g|813 827 867 889 r|769 781 847 880 g|728 762 781 836 g|718 762 762 804|706 707 762 795 g|611 686 700 740 g|664 686 707 730 r|695 707 718 783 g|558 590 707 740 g|398 451 590 591 g|366 431 451 465 g|420 451 484 497 r|387 410 474 475 g|354 378 410 442 g|378 378 398 442 r|378 398 451 485 r|410 451 483 516 r|474 483 547 580 r|547 547 611 676 r|578 590 603 708 g|536 558 590 611 g|536 547 547 569|537 538 570 590 r|558 571 634 655 r|620 634 634 699|590 611 634 655 g|569 634 655 675 r|643 643 655 687 r|505 515 644 655 g|410 431 527 590 g|366 420 442 475 r|430 451 451 497|398 398 442 462 g|410 410 442 465 r|430 443 451 474 r|378 400 451 452 g|410 410 451 497 r|398 420 451 465 g|334 354 410 420 g|345 354 431 432 r|410 431 443 452 g|398 431 484 484 r|473 495 602 644 r|578 602 602 644|578 602 611 623 r';
    const ES = '1786 1804 1804 1840|1804 1822 1822 1838|1786 1804 1840 1863 r|1838 1857 1857 1866|1820 1838 1838 1863|1820 1838 1838 1863|1748 1768 1840 1856 g|1748 1768 1788 1804 r|1660 1713 1804 1805 g|1553 1661 1697 1715 g|1560 1600 1663 1680 g|1568 1590 1592 1610|1553 1575 1590 1628 g|1568 1573 1610 1643 r|1580 1590 1610 1645 g|1568 1575 1590 1625 g|1553 1573 1590 1625 g|1519 1520 1573 1590 g|1519 1537 1592 1610 r|1537 1555 1590 1628 g|1537 1555 1628 1630 r|1607 1628 1663 1680 r|1640 1663 1680 1681 r|1643 1679 1679 1697|1626 1643 1680 1681 g|1608 1610 1628 1645 g|1570 1575 1610 1628 g|1570 1575 1610 1611 g|1553 1590 1590 1610|1585 1590 1608 1628 g|1572 1590 1608 1610 g|1570 1573 1590 1610 r|1570 1573 1590 1591 r|1485 1520 1590 1591 g|1485 1502 1502 1520|1430 1449 1502 1520 g|1430 1449 1485 1486 r|1430 1449 1467 1485 g|1359 1430 1449 1485 r|1430 1449 1467 1630 r|1448 1467 1590 1645 r|1573 1588 1698 1734 r|1520 1610 1680 1698 g|1537 1610 1663 1680 r|1590 1610 1663 1680 g|1573 1610 1770 1771 r|1730 1750 1804 1822 r|1786 1804 1840 1914 r|1786 1804 1840 1858 g|1678 1786 1804 1822 g|1768 1786 1892 1965 r|1820 1875 1914 1966 g|1840 1875 1892 1966 r|1840 1840 1914 2018 g|1730 1750 1840 1948 g|1730 1750 1770 1840 r|1730 1733 1770 1858 g|1609 1662 1733 1734 g|1661 1679 1679 1715|1680 1697 1750 1858 r|1730 1750 1770 1786 r|1678 1770 1804 1805 r|1713 1750 1804 1822 g|1713 1750 1804 1875 r|1786 1804 1858 1875 r|1768 1804 1840 1893 g|1748 1787 1787 1858|1787 1787 1787 1893|1721 1750 1787 1822 g|1589 1628 1750 1770 g|1608 1645 1663 1698 r|1552 1555 1663 1680 g|1519 1555 1575 1610 g|1519 1555 1555 1573|1485 1502 1537 1555 g|1359 1430 1502 1520 g|1395 1412 1430 1449 g|1412 1413 1430 1486 r|1342 1360 1449 1467 g|1235 1271 1378 1379 g|1182 1235 1288 1289 g|1182 1235 1253 1271 r|1182 1200 1235 1236 g|1182 1217 1217 1253|1217 1218 1218 1253|1200 1235 1288 1308 r|1217 1270 1288 1325 g|1270 1271 1343 1378 r|1342 1343 1395 1486 r|1360 1378 1395 1486 g|1342 1343 1378 1395 g|1325 1326 1343 1378 g|1307 1343 1343 1378|1343 1343 1378 1412 r|1378 1395 1412 1450 r|1360 1378 1412 1431 g|1342 1378 1378 1412|1360 1378 1395 1431 r|1270 1288 1395 1396 g|1235 1253 1288 1343 g|1182 1235 1253 1254 g|1217 1235 1253 1271 r|1200 1200 1253 1270 g|1200 1218 1235 1271 r|1235 1253 1253 1271|1200 1253 1253 1271|1235 1253 1308 1325 r|1253 1271 1308 1325 g|1235 1235 1288 1289 g|1235 1235 1325 1326 r|1271 1308 1325 1326 g|1271 1308 1325 1343 r|1325 1343 1430 1468 r|1395 1412 1412 1468|1395 1412 1430 1431 g';

    const NQ_PROFILE = [2, 8, 15, 28, 28, 41, 42, 60, 62, 62, 64, 107, 123, 148, 146, 137, 93, 90, 79, 79, 83, 109, 89, 58, 64, 68, 54, 62, 56, 41, 51, 49, 32, 38, 28, 18, 21, 21, 26, 41, 46, 42, 44, 36, 26, 66, 48, 62, 56, 50, 32, 18, 14, 18, 24, 26, 38, 56, 41, 66, 64, 62, 89, 76, 72, 78, 56, 66, 68, 54, 96, 119, 56, 54, 48, 97, 97, 78, 70, 99, 121, 141, 103, 103, 114, 92, 82, 84, 131, 104, 81, 87, 58, 68, 50, 56, 50, 56, 46, 78, 66, 86, 76, 58, 76, 97, 81, 103, 97, 106, 104, 116, 101, 118, 101, 111, 96, 91, 86, 115, 86, 76, 80, 76, 74, 98, 72, 91, 56, 52, 54, 68, 56, 70, 54, 66, 52, 40, 30, 54, 46, 44, 28, 26, 18, 14, 19, 14, 16, 10, 18, 16, 12, 14, 10, 6, 8, 4, 6, 10, 14, 10, 14, 26, 26, 26, 26];
    const YM_PROFILE = [4, 4, 6, 24, 34, 46, 76, 82, 105, 115, 100, 103, 72, 58, 51, 21, 18, 22, 31, 46, 45, 56, 60, 60, 78, 95, 83, 109, 114, 129, 111, 68, 82, 60, 54, 66, 113, 106, 95, 125, 98, 76, 66, 87, 74, 62, 84, 97, 105, 133, 112, 103, 116, 112, 103, 133, 152, 143, 143, 126, 131, 101, 116, 137, 131, 112, 116, 95, 117, 117, 87, 58, 50, 48, 44, 34, 40, 42, 50, 54, 38, 40, 31, 34, 30, 12, 12, 20, 10, 6, 8, 16, 10, 4, 4, 6, 4, 6, 4, 10, 2, 8];
    const ES_PROFILE = [5, 55, 83, 72, 107, 88, 83, 74, 39, 58, 66, 94, 110, 124, 132, 127, 85, 50, 63, 52, 66, 88, 113, 165, 139, 154, 115, 102, 85, 85, 66, 101, 127, 140, 132, 146, 113, 162, 121, 72, 50, 55, 50, 41, 17, 22, 19, 6, 3, 11, 6];

    function timeAxis(x0, step, y, labels) {
        return labels.map((t, i) => line(snap(x0 + i * step), y, snap(x0 + i * step), y + 6, AXIS) + text(x0 + i * step - 1, y + 13, t, 'middle')).join('');
    }
    const HALF_HOURS = ['14:30', '15:00', '15:30', '16:00', '16:30', '17:00', '17:30', '18:00'];
    const skipTwo = s => s.split('|').slice(2).join('|');

    function drawTriple() {
        const xAt = i => 1367.600 + i * 4.238;
        const nqY = v => 74.700 + (v - 232) * .25867, ymY = v => 736.600 + (v - 326.400) * .28646, esY = v => v / K;
        const wick = '#b4b4b4';
        let s = level(1364, 1855, 128.500) + level(1364, 1855, 171.500) + level(1364, 1855, 769.500) + level(1364, 1855, 812.500);
        s += candles(skipTwo(NQ), xAt, nqY, 1, wick) + candles(ES, xAt, esY, 1, wick) + candles(skipTwo(YM), xAt, ymY, 1, wick);
        s += profile(NQ_PROFILE, 1364, 73.500, 379, .54, [[76.400, 9, MAGENTA], [98.500, 82, CYAN], [289.500, 49, MAGENTA]]);
        s += profile(ES_PROFILE, 1364, 406.500, 711.500, .3635, [[430.500, 39, '#f070f0'], [547, 60, '#70f0f4'], [644.600, 26, '#f070f0']]);
        s += profile(YM_PROFILE, 1364, 738, 1024, .35, [[771.500, 36, MAGENTA], [909.300, 53, CYAN], [994.500, 10, MAGENTA]]);
        s += line(1855.500, 57, 1855.500, 1025, AXIS) + line(1363, 1025.500, 1856, 1025.500, AXIS);
        s += line(1363, 384.500, 1916, 384.500, AXIS) + line(1363, 717.500, 1916, 717.500, AXIS);
        const tick = (y, t) => line(1856, snap(y), 1862, snap(y), AXIS) + text(1863, y, t);
        for (let i = 0; i < 9; i++) s += tick(74.700 + i * 36.640, i === 2 ? '' : `${3485 - i * 5},00`);
        for (let i = 0; i < 13; i++) s += tick(413.600 + i * 24.450, i === 3 ? '' : `${1827 - i},00`);
        for (let i = 0; i < 10; i++) s += tick(736.600 + i * 30.460, 16090 - i * 10);
        s += priceTag(1856.500, 151, 1904.500, '3474,50') + priceTag(1856.500, 486, 1904.500, '1824,00') + priceTag(1856.500, 818, 1895.500, '16063');
        s += text(1366, 64, 'NQ (2 Min)', 'start', 'textLength="56"') + text(1366, 402.500, 'ES (2 Min)', 'start', 'textLength="53"') + text(1366, 735, 'YM (2 Min)', 'start', 'textLength="55"');
        s += copyright(1366, 1019) + timeAxis(1397.400, 63.570, 1026, HALF_HOURS);
        draw('triple', s);
    }

    // ---------- bid / ask cells; rows count down from 16090, -1 is an empty cell ----------
    const BARS = [
        { s: [29, 9, 21, 56, 84, 27, 6, 4], b: [28, 21, 31, 52, 52, 13, 12], poc: 31, up: 0, body: [30, 30] },
        { s: [26, 2, 2, 15, 9, 5, 35, 23, 5], b: [25, 20, 38, 42, 30, 22, 19, 8, 6], poc: 28, up: 1, body: [27, 29] },
        { s: [24, 1, 5, 20, 26, 21, 65, 78, 49, 4], b: [23, 10, 6, 11, 12, 2, 43, 34, 65, 61], poc: 30, up: 0, body: [29, 31] },
        { s: [30, 2, 52, 10, 42, 9], b: [30, 22, 48, 25, 24], poc: 31, up: 1, body: [30, 31], red: 1 },
        { s: [18, 8, 16, 33, 12, 2, 29, 4, 11, -1, 2, 10, 39, 32, 12], b: [17, 15, 39, 37, 33, 14, 43, 31, 22, 57, 20, 46, 23, 45, 76], poc: 30, up: 1, body: [18, 30] },
        { s: [9, 14, 21, 10, 5, 12, 39, 20, 13, 5, 11, 45, 20, 23, 20, 13, 12, 6], b: [8, 17, 47, 52, 28, 26, 31, 42, 74, 21, 33, 50, 82, 47, 62, 35, 10], poc: 19, up: 1, body: [10, 19] },
        { s: [4, 9, 15, 11, 72, 36, 30, 49, 19, 46, 13, 11], b: [4, 11, 20, 42, 78, 69, 54, 9, 17, 34, 7], poc: 7, up: 1, body: [9, 11], red: 1 },
        { s: [8, 6, 19, 31, 5, 8, 35, 40, 6, 1], b: [7, 7, 14, 41, 26, 11, 26, 30, 10, 12], poc: 13, up: 1, body: [10, 12] },
        { s: [8, 8, 11, 2, 13, 27, 9], b: [7, 21, 27, 40, 27, 47, 16], poc: 11, up: 1, body: [8, 11] },
        { s: [8, 7, 23, 56, 38, 24, 5], b: [8, 10, 57, 12, 26, 14], poc: 9, up: 0, body: [8, 11] },
        { s: [10, 12, 30, 36, 33, 15], b: [10, 45, 15, 23, 5], poc: 12, up: 0, body: [11, 12] },
        { s: [6, 15, 23, 42, 22, 29, 13, 5], b: [5, 10, 19, 33, 25, 20, 24, 7], poc: 8, up: 0, body: [7, 7] },
        { s: [8, 25, 34, 16, 27, 30, 17, 30, 39, 4], b: [8, 11, 10, 13, 12, 32, 16, 20, 13], poc: 12, up: 0, body: [8, 12] },
        { s: [7, 3, 2, 31, 21, 29, 25, 5], b: [7, 31, 21, 27, 24, 25, 20], poc: 9, up: 1, body: [8, 12] },
        { s: [1, 7, 26, 27, 33, 46, 61, 39, 4, 22], b: [1, 43, 19, 18, 81, 77, 37, 16, 22, 5], poc: 5, up: 1, body: [3, 8] },
        { s: [3, 7, 32, 12, 10, 9, 6, 51, 66], b: [2, 1, 2, -1, 1, 10, 8, 37, 46, 19], poc: 9, up: 0, body: [3, 10] },
        { s: [8, 24, 17, 42, 9, 4], b: [7, 15, 58, 32, 26, 4], poc: 8, up: 1, body: [8, 10] },
        { s: [8, 6, 10, 27, 63, 66, 82, 35, 31], b: [7, 13, 4, 31, 11, 22, 17, 2, 11], poc: 11, up: 0, body: [10, 15] },
        { s: [15, 10, 51, 34, 33, 23, 66, 63, 47, 14, 28, 89, 137, 73, 72, 74, 28], b: [14, 1, 27, 2, 7, 10, 23, 2, -1, 27, -1, 64, 53, 64, 46, 23, 22], poc: 26, up: 0, body: [16, 26] }
    ];
    const DELTAS = [-26, 89, -25, 4, 291, 368, 30, 26, 108, -34, -38, -11, -95, 32, 53, -69, 39, -209, -471];
    const VOLUME = [772, 835, 697, 865, 580, 439, 616, 808, 856, 841, 877, 832, 796, 847, 655, 814, 865, 748, 280];

    function column(x, cells, rgb, yRow) {
        const [first, ...vals] = cells, max = Math.max(...vals);
        return vals.map((v, i) => {
            const y = yRow(first + i), k = Math.max(v, 0) / max;
            const fill = v < 0 ? '#fff' : `rgb(${rgb.map(c => Math.round(255 + (c - 255) * k)).join(',')})`;
            return rect(x + .5, Math.round(y - 7) + .5, 23, 14, fill, `stroke="${v < 0 ? '#fff' : '#000'}"`)
                + (v < 0 ? '' : text(x + 22, y, v, 'end', `class="dark" ${v === max ? 'font-weight="bold"' : ''}`));
        }).join('');
    }

    function drawCells() {
        const yRow = r => 207.500 + r * 14.090;
        let s = level(1925, 3004, 360.500) + level(1925, 3004, 560.500), outlines = '', steps = '';
        BARS.forEach((bar, i) => {
            const x = 1927 + i * 52, mid = x + 25;
            const sEnd = bar.s[0] + bar.s.length - 2, bEnd = bar.b[0] + bar.b.length - 2;
            s += line(mid + .5, yRow(Math.min(bar.s[0], bar.b[0])), mid + .5, yRow(Math.max(sEnd, bEnd)), '#fff');
            s += column(x, bar.s, [255, 0, 0], yRow) + column(x + 26, bar.b, [0, 128, 0], yRow);
            const red = !bar.up || bar.red;
            s += rect(mid - (red ? 1 : 0), yRow(bar.body[0]), red ? 2.500 : 1, yRow(bar.body[1]) - yRow(bar.body[0]), red ? '#f00' : '#90ee90');
            const [top, end, ox] = bar.up ? [bar.b[0], bEnd, x + 26] : [bar.s[0], sEnd, x];
            outlines += rect(ox, Math.round(yRow(top) - 7), 24, (end - top + 1) * 14.090 + 1, 'none', `stroke="${bar.up ? '#008000' : '#f00'}" stroke-width="2"`);
            outlines += rect(x, Math.round(yRow(bar.poc) - 7), 50, 15, 'none', 'stroke="#ff0" stroke-width="2"');
            const y = 720 + VOLUME[i] / 3;
            steps += `${i ? 'V' : 'M' + x + ' '}${r1(y)}H${x + 52}`;
            s += rect(x + .5, 778.500, 51, 12, DELTAS[i] < 0 ? '#ff7f7f' : '#80c080', 'stroke="#000"') + text(x + 49, 784.500, DELTAS[i], 'end', 'class="dark"');
        });
        s += outlines;
        s += rect(1926, 772, 179, 14, '#243e62') + text(1927, 779, 'Using NinjaTickFile - Agreg Cells : 1', 'start', 'textLength="178" style="fill:#d8c9a4"');
        s += `<path d="${steps}" fill="none" stroke="#b4b9c0" stroke-width="2"/>`;
        s += arrowDown(2160.500, 425) + arrowDown(2212.500, 299) + arrowDown(2888.500, 383) + arrowUp(1952.500, 721);
        s += triLeft(2163.500, 461, MAGENTA) + triLeft(2215.500, 348, MAGENTA) + triLeft(2891.500, 446.500, MAGENTA) + triRight(1950, 629.500, '#00f');
        s += line(3004.500, 57, 3004.500, 1025, AXIS) + line(1924, 1025.500, 3005, 1025.500, AXIS) + line(1924, 796.500, 3061, 796.500, AXIS);
        for (let i = -2; i < 9; i++) {
            const y = 207.500 + i * 70.450;
            s += line(3005, snap(y), 3011, snap(y), AXIS) + (i > -2 ? text(3012.500, y, 16090 - i * 5) : '');
        }
        for (let i = 0; i < 6; i++) {
            const y = 816.700 + i * 39.870;
            s += line(3005, snap(y), 3011, snap(y), AXIS) + text(3012.500, y, 1200 - i * 200);
        }
        s += priceTag(3005.500, 573, 3045.500, '16064', true) + priceTag(3005.500, 813, 3038.500, '1213', true);
        s += timeAxis(1978, 130, 1026, ['17:25', '17:30', '17:35', '17:40', '17:45', '17:50', '17:55', '18:00']);
        s += copyright(1927, 1019) + skipIcon(2974.500, 62.500, '#d8dadd') + fBox(3023, 54) + dropButton(3038.500, 53.500);
        draw('cells', s);
    }

    function drawNq2() {
        let s = level(3067, 3778, 157.500) + level(3067, 3778, 217.500);
        s += candles(NQ, i => 3078.400 + i * 5.995, v => v / 2.8, 2, '#fff');
        s += profile(NQ_PROFILE, 3067, 81, 503.500, .4975, [[86.500, 8, MAGENTA], [116.400, 74, CYAN], [380.500, 46, MAGENTA]]);
        s += line(3778.500, 58, 3778.500, 505, AXIS) + line(3066, 505.500, 3779, 505.500, AXIS);
        for (let i = 0; i < 9; i++) {
            const y = 82.900 + i * 50.600;
            s += line(3779, snap(y), 3785, snap(y), AXIS) + (i === 2 ? '' : text(3786, y, `${3485 - i * 5},00`));
        }
        s += priceTag(3779.500, 188, 3827.500, '3474,50') + timeAxis(3132.600, 89.940, 505, HALF_HOURS);
        s += text(3552.500, 135.500, 'Sell', 'middle') + text(3552, 147.500, '3 @ 3474,50', 'middle') + arrowDown(3552.500, 158);
        s += text(3558.500, 243.500, 'Close', 'middle') + text(3558, 255.500, '3 @ 3475,00', 'middle') + arrowUp(3558.500, 234);
        s += triRight(3550, 188, MAGENTA) + triLeft(3561.500, 184, '#00f');
        s += copyright(3069, 499.500) + text(3762.500, 494.500, 'Time remaining = 00:00:46', 'end', 'textLength="133"') + dropButton(3816.500, 54.500);
        draw('nq2', s);
    }

    function drawYm2() {
        const X = cx => 3060 + cx / 2.0103, Y = cy => 540 + cy / K;
        let s = level(3066, 3787, 691.500) + level(3066, 3787, 743.500) + level(3066, 3787, 1015.500);
        s += candles(YM, i => 3075.700 + i * 5.997, Y, 2, '#fff');
        s += profile(YM_PROFILE, 3066, 654.300, 1025, .4975, [[694.500, 51, '#f070f0'], [859.500, 76, '#70f0f4'], [962.500, 15, '#f070f0']]);
        s += line(3787.500, 587, 3787.500, 1027, AXIS) + line(3065, 1027.500, 3788, 1027.500, AXIS);
        for (let i = 0; i < 12; i++) {
            const y = 615.800 + i * 36.630;
            s += line(3788, snap(y), 3794, snap(y), AXIS) + text(3796, y, 16100 - i * 10);
        }
        s += priceTag(3788.500, 749.500, 3827.500, '16063') + timeAxis(3129.700, 89.960, 1027, HALF_HOURS);
        [[1248, 286, 'Sell'], [1250, 320, '1 @ 16080'], [1236, 382, 'Sell'], [1238, 416, '1 @ 16072'], [1406, 350, 'Sell'], [1416, 384, '@ 16073'],
            [562, 605, 'Sell'], [562, 639, '1 @ 16046'], [573, 668, 'Sell'], [575, 703, '2 @ 16032'], [547, 1125, 'Buy'], [550, 1159, '2 @ 16033'],
            [547, 1195, 'Buy'], [550, 1229, '1 @ 16033'], [1186, 785, 'Buy'], [1190, 820, '3 @ 16060']].forEach(([x, y, t]) => { s += text(X(x), Y(y), t, 'middle'); });
        [[1248, 348], [1236, 446], [1406, 413], [562, 668], [574, 733]].forEach(([x, y]) => { s += arrowDown(r1(X(x)), r1(Y(y))); });
        [[550, 1097], [1188, 757]].forEach(([x, y]) => { s += arrowUp(r1(X(x)), r1(Y(y))); });
        [[1257, 431], [1243, 515], [1412, 507], [568, 794], [580, 941]].forEach(([x, y]) => { s += triLeft(r1(X(x)), r1(Y(y)), MAGENTA); });
        [[543, 930], [1182, 643]].forEach(([x, y]) => { s += triRight(r1(X(x)), r1(Y(y)), '#00f'); });
        s += copyright(3068, 1021) + text(3771.500, 1016.500, 'Time remaining = 00:00:46', 'end', 'textLength="133"');
        s += skipIcon(3757.500, 592.500, 'none') + fBox(3799, 584) + dropButton(3814.500, 583.500);
        draw('ym2', s);
    }

    drawYm30();
    drawBack();
    drawTriple();
    drawCells();
    drawNq2();
    drawYm2();
</script>
</body>
</html>
